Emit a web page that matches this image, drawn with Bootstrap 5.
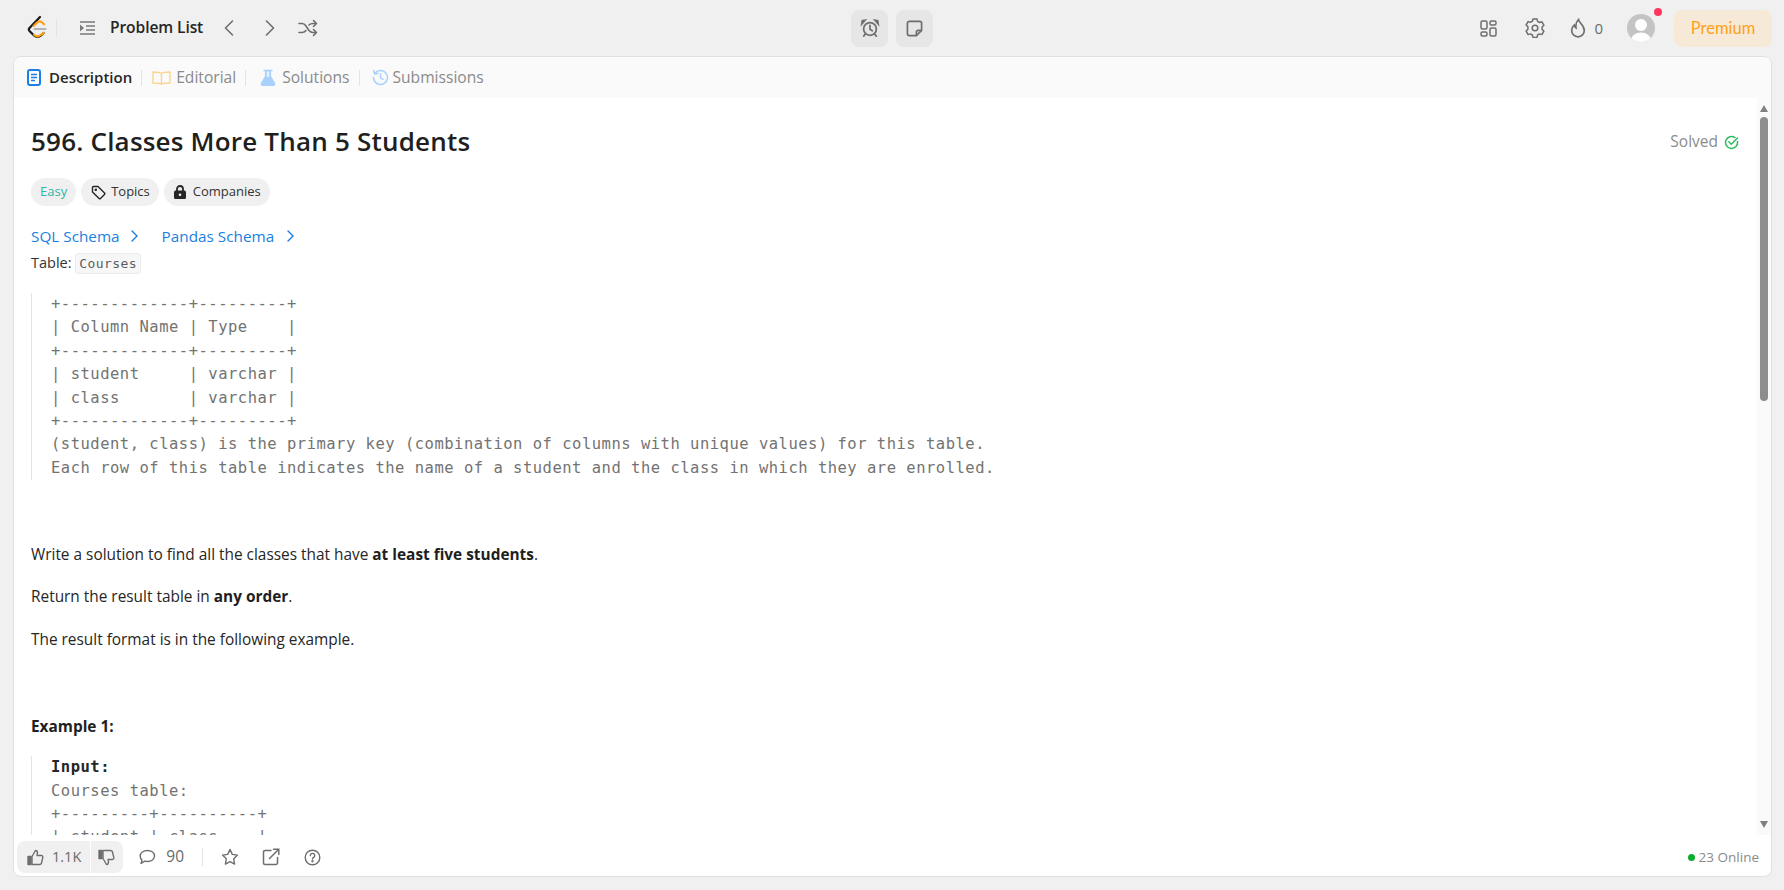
<!DOCTYPE html>
<html lang="en"><head><meta charset="utf-8"><title>596. Classes More Than 5 Students</title>
<link href="https://cdn.jsdelivr.net/npm/bootstrap@5.3.0/dist/css/bootstrap.min.css" rel="stylesheet">
<style>
html,body{height:100%;overflow:hidden}
body{background:#f0f0f0;font-family:"Open Sans","Noto Sans",sans-serif;color:#262626;font-size:14px}
svg{display:block;flex:none}
.topbar{height:56px;padding:0 12px}
.side{flex:1 1 0}
.vsep{width:1px;height:18px;background:#e3e3e3}
.plist{font-size:15.6px;font-weight:600;color:#262626;letter-spacing:-.1px}
.sqbtn{width:37px;height:37px;background:#e6e6e6;border-radius:8px}
.fire{font-size:15px;color:#6b6b6b}
.avatar{width:28px;height:28px;border-radius:50%;background:#c4c4c4;overflow:hidden}
.dotred{position:absolute;right:-7px;top:-6px;width:8px;height:8px;border-radius:50%;background:#ff375f}
.prem{height:37px;width:98px;background:#f7e9d7;border-radius:8px;color:#ffa116;font-size:16.5px;font-family:"Lato",sans-serif}
.panel{height:821px;margin:0 12px 0 13px;background:#fff;border:1px solid #e0e0e0;border-radius:8px;overflow:hidden}
.tabbar{height:41px;background:#fafafa;padding:0 13px;font-size:15.6px;color:#8a8a8a}
.tabbar b{font-weight:600;color:#262626;font-size:15px}
.tsep{width:1px;height:16px;background:#e4e4e4;margin:0 9px}
.midrow{min-height:0;flex:1 1 0}
.scrollpane{flex:1 1 0;overflow:hidden;padding:0 18px 0 17px;min-width:0}
.vtrack{width:14px;padding-top:7px;padding-bottom:7px;background:#fafafa}
.arrowup{width:0;height:0;border:4.500px solid transparent;border-top:0;border-bottom:7px solid #808080;align-self:center}
.arrowdn{width:0;height:0;border:4.500px solid transparent;border-bottom:0;border-top:7px solid #808080;align-self:center;margin-top:auto}
.thumb{width:8px;height:284px;background:#8d8d8d;border-radius:4px;align-self:center;margin-top:5px}
.headrow{height:36px;margin-top:26px}
.ptitle{font-size:26px;font-weight:600;color:#1f1f1f;margin:0;letter-spacing:.2px}
.solved{font-size:15.5px;color:#8c8c8c;gap:6px}
.chip{height:28px;border-radius:14px;background:#f0f0f0;padding:0 9px 0 10px;font-size:13px;color:#333;gap:5px}
.chipeasy{color:#2fb5a8;padding:0 9px}
.chiplock{gap:7px}
.tagrow{margin-top:18px;gap:5px}
.schemas{margin-top:20px;font-size:15.3px;line-height:20px}
.schemas a{color:#1a7fe0;text-decoration:none}
.tblline{line-height:24px;margin-top:5px;font-size:14.5px;color:#333}
.inlinecode{font-family:"DejaVu Sans Mono",monospace;font-size:13px;letter-spacing:.4px;background:#f7f7f7;border:1px solid #ececec;border-radius:4px;padding:2px 3px;color:#5c5c5c}
.blockpre{margin:0;border-left:1px solid #e4e4e4;padding-left:19px;font-family:"DejaVu Sans Mono",monospace;font-size:15.500px;letter-spacing:.5px;line-height:23.400px;color:#737373;overflow:visible}
.blockpre b{color:#262626}
.clipline{display:block;height:9px;overflow:hidden}
.para{margin:0;font-size:15.400px;line-height:22px;color:#262626}
.para b{font-weight:700;color:#1f1f1f}
.foot{height:41px;padding:4px 12px 1px 3px;color:#6b6b6b}
.votes{height:32px;background:#f0f0f0;border-radius:8px;font-size:14.500px}
.online{font-size:13.500px;color:#8a8a8a;font-weight:500}
.gdot{width:7px;height:7px;border-radius:50%;background:#0aad2f}
</style></head><body>
<header class="topbar d-flex align-items-center">
 <div class="side d-flex align-items-center">
  <svg style="margin-left:14px" width="22" height="26" viewBox="0 0 22 26"><path d="M14 2 3.500 13c-.8.900-.8 2 0 2.900L8 20.500c2 2 5 2 7 0l2.500-2.500" fill="none" stroke="#1a1a1a" stroke-width="2.200" stroke-linecap="round"/><path d="M7.500 11 11 7.600c1.500-1.500 3.500-1.500 5-.3l2 2" fill="none" stroke="#ffa116" stroke-width="2.200" stroke-linecap="round"/><path d="M8.500 14h11" stroke="#b3b3b3" stroke-width="2" stroke-linecap="round"/><path d="M8 19.800c2 2 5 2 7 0l2.500-2" fill="none" stroke="#ffa116" stroke-width="2.200" stroke-linecap="round"/></svg>
  <span class="vsep ms-2"></span>
  <svg style="margin-left:22px" width="17" height="14" viewBox="0 0 17 14" fill="none" stroke="#7a7a7a" stroke-width="1.500"><path d="M1 1h15M7 5h9M7 9h9M1 13h15"/><path d="M1 3.500 5 7l-4 3.500z" fill="#7a7a7a" stroke="none"/></svg>
  <span class="plist" style="margin-left:14px">Problem List</span>
  <svg style="margin-left:20px" width="12" height="18" viewBox="0 0 12 18" fill="none" stroke="#6e6e6e" stroke-width="1.600" stroke-linecap="round" stroke-linejoin="round"><path d="M9.500 2 2.500 9l7 7"/></svg>
  <svg style="margin-left:29px" width="12" height="18" viewBox="0 0 12 18" fill="none" stroke="#6e6e6e" stroke-width="1.600" stroke-linecap="round" stroke-linejoin="round"><path d="m2.500 2 7 7-7 7"/></svg>
  <svg style="margin-left:22px" width="20" height="18" viewBox="0 0 20 18" fill="none" stroke="#6e6e6e" stroke-width="1.600" stroke-linecap="round" stroke-linejoin="round"><path d="M1 4.500h3c2 0 3 1 4 2.500l3 4.500c1 1.200 2 2 4 2h3M1 13.500h3c2 0 3-.8 4-2M11 6c1-1 2-1.500 4-1.500h3M15.500 1.500l3 3-3 3M15.500 10.500l3 3-3 3"/></svg>
 </div>
 <div class="d-flex align-items-center gap-2">
  <span class="sqbtn d-flex align-items-center justify-content-center"><svg width="20" height="20" viewBox="0 0 22 22" fill="none" stroke="#6e6e6e" stroke-width="1.900" stroke-linecap="round"><circle cx="11" cy="12" r="7"/><path d="M11 8v4.500l2.500 1.500"/><path d="M2 6.500 5.500 2.500 2.500 3zM20 6.500l-3.500-4 3 .5z"/><path d="M5.500 18 4 20M16.500 18 18 20"/></svg></span>
  <span class="sqbtn d-flex align-items-center justify-content-center"><svg width="17" height="17" viewBox="0 0 18 18" fill="none" stroke="#6e6e6e" stroke-width="1.800" stroke-linejoin="round"><path d="M3.500 1.500h11a2 2 0 0 1 2 2V11l-5.500 5.500H3.500a2 2 0 0 1-2-2v-11a2 2 0 0 1 2-2z"/><path d="M11 16.500V13a2 2 0 0 1 2-2h3.500"/></svg></span>
 </div>
 <div class="side d-flex align-items-center justify-content-end">
  <svg width="17" height="17" viewBox="0 0 17 17" fill="none" stroke="#6e6e6e" stroke-width="1.500"><rect x="1" y="1" width="6" height="8" rx="1.500"/><rect x="10" y="1" width="6" height="4" rx="1.500"/><rect x="1" y="12" width="6" height="4" rx="1.500"/><rect x="10" y="8" width="6" height="8" rx="1.500"/></svg>
  <svg style="margin-left:28px" width="20" height="20" viewBox="0 0 20 20" fill="none" stroke="#6e6e6e" stroke-width="1.500" stroke-linejoin="round"><path d="M8 1.800h4l.6 2.400 1.900 1.100 2.400-.7 2 3.400-1.800 1.800v2.400l1.800 1.800-2 3.400-2.400-.7-1.900 1.100-.6 2.400H8l-.6-2.400-1.900-1.100-2.400.7-2-3.400L2.900 12V9.600L1.100 7.800l2-3.400 2.400.7 1.900-1.100z" transform="translate(0 -.8)"/><circle cx="10" cy="10" r="2.800"/></svg>
  <svg style="margin-left:25px" width="16" height="20" viewBox="0 0 16 20" fill="none" stroke="#6e6e6e" stroke-width="1.700" stroke-linecap="round"><path d="M8.500 1.500c.5 3.500 5.800 5.500 5.800 11a6.300 6.300 0 0 1-12.600 0c0-2.300 1-4 2.500-5.300.3 1.500 1 2.300 1.800 2.700C5.500 7 6.500 3.500 8.500 1.500z"/></svg>
  <span class="fire ms-2">0</span>
  <span class="position-relative" style="margin-left:24px"><span class="avatar d-block"><svg width="28" height="28" viewBox="0 0 28 28"><circle cx="14" cy="11" r="6" fill="#fff"/><ellipse cx="14" cy="26" rx="10" ry="7.500" fill="#fff"/></svg></span><span class="dotred"></span></span>
  <span class="prem d-flex align-items-center justify-content-center" style="margin-left:19px">Premium</span>
 </div>
</header>
<main class="panel d-flex flex-column">
 <nav class="tabbar d-flex align-items-center flex-none">
  <svg width="14" height="17" viewBox="0 0 14 17"><rect x="1" y="1" width="12" height="15" rx="2" fill="#fff" stroke="#1a80e6" stroke-width="2"/><path d="M4 5.500h6M4 8.500h6M4 11.500h4" stroke="#1a80e6" stroke-width="1.500"/></svg>
  <b class="ms-2">Description</b><span class="tsep"></span>
  <svg style="margin-left:1px" width="19" height="14" viewBox="0 0 19 14" fill="none" stroke="#fbd38d" stroke-width="1.400"><path d="M9.500 2.500C8 1.300 5 1 1 1v11c4 0 7 .2 8.500 1.200C11 12.200 14 12 18 12V1c-4 0-7 .3-8.500 1.500zM9.500 2.500v10.700"/></svg>
  <span style="margin-left:5px">Editorial</span><span class="tsep"></span>
  <svg style="margin-left:5px" width="16" height="18" viewBox="0 0 16 18"><path d="M5.500 1.800v5.700L1.500 14c-.7 1.300 0 2.500 1.500 2.500h10c1.500 0 2.200-1.200 1.500-2.500l-4-6.500V1.800" fill="#a9d1fb" stroke="#a9d1fb" stroke-width="1.200"/><path d="M4 1.500h8" stroke="#a9d1fb" stroke-width="1.600" stroke-linecap="round"/><path d="M6.800 2.500v5.300h2.400V2.500z" fill="#eaf4ff"/></svg>
  <span style="margin-left:6px">Solutions</span><span class="tsep"></span>
  <svg style="margin-left:3px" width="17" height="17" viewBox="0 0 17 17" fill="none" stroke="#a9d1fb" stroke-width="1.500" stroke-linecap="round"><path d="M3 4.200a7 7 0 1 1-1.500 4.300M1.800 1.500 2.500 5l3.500-.5M8.500 5v3.800l2.500 1.500"/></svg>
  <span style="margin-left:4px">Submissions</span>
 </nav>
 <div class="midrow d-flex">
  <div class="scrollpane">
   <div class="headrow d-flex align-items-center justify-content-between">
    <h1 class="ptitle">596. Classes More Than 5 Students</h1>
    <span class="solved d-flex align-items-center">Solved <svg width="15" height="15" viewBox="0 0 15 15" fill="none" stroke="#2cbb5d" stroke-width="1.500" stroke-linecap="round"><path d="M13.500 6.500a6 6 0 1 1-2.500-4"/><path d="m4.800 6.800 2.400 2.400L13.500 3"/></svg></span>
   </div>
   <div class="tagrow d-flex">
    <span class="chip chipeasy d-flex align-items-center">Easy</span>
    <span class="chip d-flex align-items-center"><svg width="15" height="15" viewBox="0 0 15 15" fill="none" stroke="#262626" stroke-width="1.400" stroke-linejoin="round"><path d="M1.500 2.500a1 1 0 0 1 1-1h4.500l6.500 6.500a1 1 0 0 1 0 1.400l-4 4a1 1 0 0 1-1.400 0L1.500 6.900z"/><circle cx="4.800" cy="4.800" r=".6"/></svg>Topics</span>
    <span class="chip chiplock d-flex align-items-center"><svg width="12" height="14" viewBox="0 0 12 14"><path d="M3 6V4a3 3 0 0 1 6 0v2" fill="none" stroke="#262626" stroke-width="1.800"/><rect y="5.500" width="12" height="8.500" rx="1.500" fill="#262626"/><circle cx="6" cy="9.700" r="1.300" fill="#f0f0f0"/></svg>Companies</span>
   </div>
   <div class="schemas d-flex align-items-center">
    <a href="#">SQL Schema</a><svg style="margin-left:10px" width="9" height="14" viewBox="0 0 9 14" fill="none" stroke="#1a7fe0" stroke-width="1.400" stroke-linecap="round"><path d="m2 2 5 5-5 5"/></svg>
    <a href="#" style="margin-left:23px">Pandas Schema</a><svg style="margin-left:12px" width="9" height="14" viewBox="0 0 9 14" fill="none" stroke="#1a7fe0" stroke-width="1.400" stroke-linecap="round"><path d="m2 2 5 5-5 5"/></svg>
   </div>
   <div class="tblline">Table: <code class="inlinecode">Courses</code></div>
   <pre class="blockpre" style="margin-top:17px">+-------------+---------+
| Column Name | Type    |
+-------------+---------+
| student     | varchar |
| class       | varchar |
+-------------+---------+
(student, class) is the primary key (combination of columns with unique values) for this table.
Each row of this table indicates the name of a student and the class in which they are enrolled.</pre>
   <p class="para" style="margin-top:64px">Write a solution to find all the classes that have <b>at least five students</b>.</p>
   <p class="para" style="margin-top:20px">Return the result table in <b>any order</b>.</p>
   <p class="para" style="margin-top:21px">The result format is in the following example.</p>
   <p class="para" style="margin-top:65px"><b>Example 1:</b></p>
   <pre class="blockpre" style="margin-top:18px"><b>Input:</b>
Courses table:
+---------+----------+
<span class="clipline">| student | class    |</span></pre>
  </div>
  <div class="vtrack d-flex flex-column">
   <span class="arrowup"></span><span class="thumb"></span><span class="arrowdn"></span>
  </div>
 </div>
 <footer class="foot d-flex align-items-center justify-content-between">
  <div class="d-flex align-items-center">
   <div class="votes d-flex align-items-center">
    <span class="d-flex align-items-center gap-2" style="padding:0 9px 0 10px;border-right:1px solid #fff;height:32px"><svg width="17" height="17" viewBox="0 0 17 17" fill="none" stroke="#6e6e6e" stroke-width="1.400" stroke-linejoin="round"><path d="M1 7.500h3v8H1z" fill="#6e6e6e"/><path d="M5 7.500 8.500 1.500c1.500 0 2 1 2 2.200L10 6.500h4.500c1 0 1.500.8 1.300 1.800l-1.300 5.700c-.2 1-1 1.500-2 1.500H5z"/></svg><span>1.1K</span></span>
    <span class="d-flex align-items-center" style="padding:0 8px 0 7px;height:32px"><svg width="17" height="17" viewBox="0 0 17 17" fill="none" stroke="#6e6e6e" stroke-width="1.400" stroke-linejoin="round"><path d="M1 9.500h3v-8H1z" fill="#6e6e6e"/><path d="M5 9.500 8.500 15.500c1.500 0 2-1 2-2.200L10 10.500h4.500c1 0 1.500-.8 1.300-1.800L14.500 3c-.2-1-1-1.500-2-1.500H5z"/></svg></span>
   </div>
   <svg style="margin-left:16px" width="17" height="16" viewBox="0 0 17 16" fill="none" stroke="#6e6e6e" stroke-width="1.400" stroke-linejoin="round"><path d="M8.500 1.500c4 0 7 2.300 7 5.500s-3 5.500-7 5.500c-1 0-1.800-.1-2.600-.4L2 14.500l1-3.300C1.800 10 1.200 8.600 1.200 7c0-3.200 3.300-5.500 7.300-5.500z"/></svg>
   <span style="font-size:15.500px;margin-left:10px">90</span>
   <span class="vsep" style="margin-left:18px"></span>
   <svg style="margin-left:18px" width="18" height="18" viewBox="0 0 18 18" fill="none" stroke="#6e6e6e" stroke-width="1.400" stroke-linejoin="round"><path d="m9 1.500 2.300 4.900 5.200.7-3.800 3.700.9 5.300L9 13.600l-4.600 2.500.9-5.300L1.500 7.100l5.200-.7z"/></svg>
   <svg style="margin-left:23px" width="18" height="18" viewBox="0 0 18 18" fill="none" stroke="#6e6e6e" stroke-width="1.500" stroke-linecap="round"><path d="M9 2.500H3a1.500 1.500 0 0 0-1.500 1.500v11A1.500 1.500 0 0 0 3 16.500h11a1.500 1.500 0 0 0 1.500-1.500V9.500M7.500 10.500l9-9M11.500 1.200h5.300v5.300"/></svg>
   <svg style="margin-left:24px" width="17" height="17" viewBox="0 0 17 17" fill="none" stroke="#6e6e6e" stroke-width="1.400" stroke-linecap="round"><circle cx="8.500" cy="8.500" r="7.300"/><path d="M6.300 6.500a2.200 2.200 0 1 1 3.300 2c-.8.400-1.100.8-1.100 1.600"/><circle cx="8.500" cy="12.300" r=".5"/></svg>
  </div>
  <div class="online d-flex align-items-center gap-1"><span class="gdot"></span>23 Online</div>
 </footer>
</main>
</body></html>
